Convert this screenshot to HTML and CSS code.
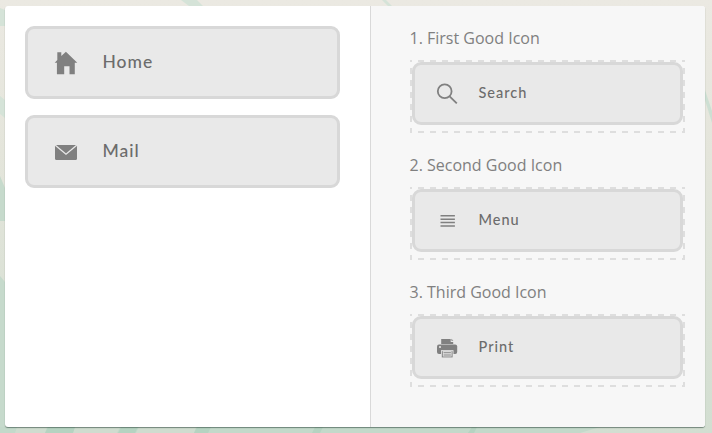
FILE: index.html
```html
<!DOCTYPE html>
<html lang="en">
<head>
<meta charset="utf-8">
<title>Icons</title>
<link rel="stylesheet" href="styles.css">
</head>
<body>
<svg class="backdrop" viewBox="0 0 712 433" aria-hidden="true">
  <defs><linearGradient id="wash" x1="0" y1="0" x2="0" y2="1"><stop offset="0" stop-color="#ebe9e2"/><stop offset=".35" stop-color="#e4e5db"/><stop offset="1" stop-color="#d2ded1"/></linearGradient></defs>
  <path fill="url(#wash)" d="M0 0h712v433H0z"/>
  <path fill="#d5e3d8" d="M0 8l5 2v16H0zM0 96l5 4v18l-5-4zM181 0h16l6 6h-14zM382 0h4l6 6h-4z"/>
  <path fill="#c6dacc" d="M0 176l5 12v33H0zM0 276l5 6v151H0z"/>
  <path fill="#c3d9ca" d="M0 427h600l-20 6H0z"/>
  <path fill="#cfdccf" d="M17 427h30l-2 6H15zM75 427h45l-3 6H73zM139 427h57l-2 6h-58z"/>
  <path fill="#b5d3c1" d="M48 427h27l-2 6H45zM121 427h17l-3 6h-17zM197 427h14l-3 6h-14zM315 427h8l-3 6h-8zM472 427h5l-3 6h-6z"/>
  <path fill="#cddfd3" d="M705 90l7 21v12l-7-23z"/>
</svg>
<main class="panel">
  <section class="source">
    <div class="button">
      <svg class="icon" viewBox="0 0 24 24"><path d="M.7 11.7 3.3 9V1.3h4V5l4.6-4.2L23.3 11.7h-2.5v11.6h-5.3v-8h-5.3v8H2.9V11.7z"/></svg>
      <span>Home</span>
    </div>
    <div class="button">
      <svg class="icon" viewBox="0 0 24 24"><rect x="1" y="5" width="22" height="15" rx="1.5"/><path class="line" d="M1.3 5.2 12 14.2 22.7 5.2"/></svg>
      <span>Mail</span>
    </div>
  </section>
  <section class="targets">
    <h2>1. First Good Icon</h2>
    <div class="slot"><div class="button small">
      <svg class="icon" viewBox="0 0 24 24"><g class="glass"><circle cx="9.7" cy="9.2" r="6.9"/><path d="m14.6 14.3 7.2 7"/></g></svg>
      <span>Search</span>
    </div></div>
    <h2>2. Second Good Icon</h2>
    <div class="slot"><div class="button small">
      <svg class="icon" viewBox="0 0 24 24"><path d="M5.5 6h14.4v1.5H5.5zM5.5 9.4h14.4v1.5H5.5zM5.5 12.8h14.4v1.5H5.5zM5.5 16.2h14.4v1.5H5.5z"/></svg>
      <span>Menu</span>
    </div></div>
    <h2>3. Third Good Icon</h2>
    <div class="slot"><div class="button small">
      <svg class="icon" viewBox="0 0 24 24"><path d="M6.2 3h9.5v3h2.5v2H6.2z"/><path d="m16.4 2.8 2 2h-2z"/><rect x="2" y="8.5" width="20.2" height="9.5" rx="2"/><circle class="paper" cx="5" cy="11" r="1"/><path class="paper" d="M6 14.2h12.5v7.3H6z"/><path d="M6.8 15.2h10.8v6.2H6.8z"/><path class="paper" d="M7.8 15.2h8.8v5.3H7.8z"/><path d="M8.5 16.3h7.4v1H8.5zM8.5 18.5h7.4v1H8.5z"/></svg>
      <span>Print</span>
    </div></div>
  </section>
</main>
</body>
</html>
```

FILE: styles.css
```css
* { box-sizing: border-box; }

body {
  margin: 0;
  height: 433px;
  padding: 6px 7px 6px 5px;
  overflow: hidden;
  background: #dfe4da;
}

.backdrop {
  position: absolute;
  top: 0;
  left: 0;
  width: 712px;
  height: 433px;
  z-index: -1;
}

.panel {
  display: grid;
  grid-template-columns: 365px 1fr;
  height: 421px;
  border-radius: 3px;
  background: #fff;
  box-shadow: 0 1px 1px rgba(50, 75, 65, .6);
  overflow: hidden;
}

.source {
  display: flex;
  flex-direction: column;
  gap: 16px;
  padding: 20px 30px 0 20px;
}

.targets {
  padding: 20px 20px 0 39px;
  border-left: 1px solid #d9d9d9;
  background: #f7f7f7;
}

.button {
  display: flex;
  align-items: center;
  height: 73px;
  padding-left: 26px;
  border: 3px solid #d8d8d8;
  border-radius: 9px;
  background: #e9e9e9;
  color: #6c6c6c;
  font: 500 17.5px Lato, sans-serif;
  letter-spacing: 1px;
}

.button span {
  margin-left: 24.5px;
  padding-bottom: 2px;
}

.icon {
  flex: none;
  width: 24px;
  height: 24px;
  fill: #808080;
}

.line {
  fill: none;
  stroke: #e9e9e9;
  stroke-width: 1.3;
}

.glass {
  fill: none;
  stroke: #808080;
  stroke-width: 1.8;
}

.paper { fill: #e9e9e9; }

h2 {
  height: 24px;
  margin: 0 0 0 -.5px;
  color: #808080;
  font: 400 16px/24px "Open Sans", sans-serif;
  white-space: nowrap;
}

.slot {
  height: 73px;
  margin: 10px 0 20px;
  padding: 2px;
  background:
    linear-gradient(#dedede, #dedede) 0 0 / 2px 2px no-repeat,
    linear-gradient(#dedede, #dedede) 100% 0 / 2px 2px no-repeat,
    repeating-linear-gradient(90deg, transparent 0 6px, #dedede 6px 12px) 2px 0 / 271px 2px no-repeat,
    repeating-linear-gradient(90deg, transparent 0 6px, #dedede 6px 12px) 2px 100% / 271px 2px no-repeat,
    repeating-linear-gradient(transparent 0 6px, #dedede 6px 12px) 0 2px / 2px 71px no-repeat,
    repeating-linear-gradient(transparent 0 6px, #dedede 6px 12px) 100% 2px / 2px 71px no-repeat;
}

.small {
  height: 63px;
  padding-left: 20px;
  font-size: 14.5px;
  letter-spacing: 1px;
}

.small span { margin-left: 19.5px; }
```
